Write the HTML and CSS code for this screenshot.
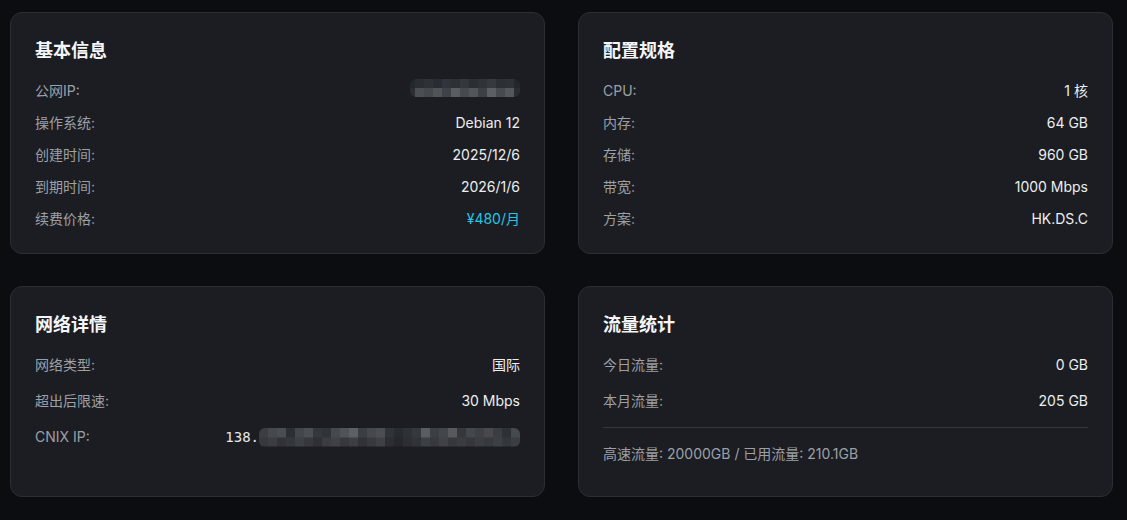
FILE: index.html
```html
<!DOCTYPE html>
<html lang="zh-CN">
<head>
<meta charset="utf-8">
<title>服务器详情</title>
<link rel="stylesheet" href="styles.css">
</head>
<body>
<main class="grid">
  <section class="card">
    <h2 class="card-title">基本信息</h2>
    <div class="rows">
      <div class="row"><span class="label">公网IP:</span><span class="value"><span class="mask mask-ip"></span></span></div>
      <div class="row"><span class="label">操作系统:</span><span class="value">Debian 12</span></div>
      <div class="row"><span class="label">创建时间:</span><span class="value">2025/12/6</span></div>
      <div class="row"><span class="label">到期时间:</span><span class="value">2026/1/6</span></div>
      <div class="row"><span class="label">续费价格:</span><span class="value price">¥480/月</span></div>
    </div>
  </section>
  <section class="card">
    <h2 class="card-title">配置规格</h2>
    <div class="rows">
      <div class="row"><span class="label">CPU:</span><span class="value">1 核</span></div>
      <div class="row"><span class="label">内存:</span><span class="value">64 GB</span></div>
      <div class="row"><span class="label">存储:</span><span class="value">960 GB</span></div>
      <div class="row"><span class="label">带宽:</span><span class="value">1000 Mbps</span></div>
      <div class="row"><span class="label">方案:</span><span class="value">HK.DS.C</span></div>
    </div>
  </section>
  <section class="card">
    <h2 class="card-title">网络详情</h2>
    <div class="rows rows-wide">
      <div class="row"><span class="label">网络类型:</span><span class="value">国际</span></div>
      <div class="row"><span class="label">超出后限速:</span><span class="value">30 Mbps</span></div>
      <div class="row"><span class="label">CNIX IP:</span><span class="value mono">138.<span class="mask mask-cnix"></span></span></div>
    </div>
  </section>
  <section class="card">
    <h2 class="card-title">流量统计</h2>
    <div class="rows rows-wide">
      <div class="row"><span class="label">今日流量:</span><span class="value">0 GB</span></div>
      <div class="row"><span class="label">本月流量:</span><span class="value">205 GB</span></div>
    </div>
    <div class="traffic-foot">高速流量: 20000GB / 已用流量: 210.1GB</div>
  </section>
</main>
</body>
</html>
```
FILE: styles.css
```css
* { box-sizing: border-box; }
html, body { margin: 0; padding: 0; }
body {
  background: #0b0d11;
  color: #e8eaed;
  font-family: Inter, "Noto Sans CJK SC", sans-serif;
  font-size: 14px;
  width: 1127px;
  height: 520px;
  overflow: hidden;
}
.grid {
  display: grid;
  grid-template-columns: 535px 535px;
  column-gap: 33px;
  row-gap: 32px;
  padding: 12px 14px 0 10px;
}
.card {
  background: #1b1d22;
  border: 1px solid #2b2e33;
  border-radius: 12px;
  padding: 24px;
}
.card-title {
  margin: 0 0 16px;
  font-size: 18px;
  line-height: 28px;
  font-weight: 600;
  color: #f4f5f6;
}
.rows {
  display: flex;
  flex-direction: column;
  gap: 12px;
}
.rows-wide { gap: 16px; }
.row {
  display: flex;
  justify-content: space-between;
  align-items: center;
  line-height: 20px;
  height: 20px;
}
.label { color: #9ba0a8; }
.value { color: #eceef0; display: inline-flex; align-items: center; }
.price { color: #27c6e3; }
.mono {
  font-family: "DejaVu Sans Mono", "Liberation Mono", monospace;
  font-size: 14px;
  color: #e6e8ea;
}
.mask {
  display: inline-block;
  filter: blur(0.7px);
  border-radius: 6px;
}
.mask-ip {
  width: 110px;
  height: 18px;
  margin-top: -6px;
  background:
    linear-gradient(to right,
      #24272b 0 5px, #2a2d31 5px 14px, #2e3135 14px 23px, #292c30 23px 32px, #31343a 32px 41px,
      #2d3034 41px 50px, #34373b 50px 59px, #2b2e32 59px 68px, #303337 68px 77px, #36393d 77px 86px,
      #2c2f33 86px 95px, #2e3135 95px 104px, #23262a 104px 110px) top / 100% 50% no-repeat,
    linear-gradient(to right,
      #2a2d31 0 5px, #4b4e52 5px 14px, #45484c 14px 23px, #505357 23px 32px, #3f4246 32px 41px,
      #5a5d61 41px 50px, #46494d 50px 59px, #525559 59px 68px, #3d4044 68px 77px, #5c5f63 77px 86px,
      #474a4e 86px 95px, #54575b 95px 104px, #2a2d31 104px 110px) bottom / 100% 50% no-repeat;
}
.mask-cnix {
  width: 261px;
  height: 19px;
  margin-left: 0;
  background:
    linear-gradient(to right,
      #3a3d41 0 9px, #45484c 9px 18px, #4a4d51 18px 27px, #2c2f33 27px 36px, #43464a 36px 45px,
      #4b4e52 45px 54px, #34373b 54px 63px, #303337 63px 72px, #46494d 72px 81px, #505357 81px 90px,
      #5d6064 90px 99px, #3b3e42 99px 108px, #45484c 108px 117px, #4a4d51 117px 126px, #303337 126px 135px,
      #282b2f 135px 144px, #2e3135 144px 153px, #35383c 153px 162px, #5a5d61 162px 171px, #3c3f43 171px 180px,
      #43464a 180px 189px, #57595d 189px 198px, #34373b 198px 207px, #44474b 207px 216px, #3d4044 216px 225px,
      #47494d 225px 234px, #3a3d41 234px 243px, #2d3034 243px 252px, #46494d 252px 261px) top / 100% 50% no-repeat,
    linear-gradient(to right,
      #35383c 0 9px, #3a3d41 9px 18px, #2f3236 18px 27px, #34373b 27px 36px, #3c3f43 36px 45px,
      #35383c 45px 54px, #2d3034 54px 63px, #393c40 63px 72px, #3e4145 72px 81px, #35383c 81px 90px,
      #3b3e42 90px 99px, #2f3236 99px 108px, #37393d 108px 117px, #3d4044 117px 126px, #2a2d31 126px 135px,
      #24272b 135px 144px, #2b2e32 144px 153px, #303337 153px 162px, #3c3f43 162px 171px, #36393d 171px 180px,
      #3f4246 180px 189px, #35383c 189px 198px, #393c40 198px 207px, #34373b 207px 216px, #3a3d41 216px 225px,
      #36393d 225px 234px, #3c3f43 234px 243px, #34373b 243px 252px, #3a3d41 252px 261px) bottom / 100% 50% no-repeat;
}
.traffic-foot {
  margin-top: 16px;
  margin-bottom: 8px;
  border-top: 1px solid #33363b;
  padding-top: 16px;
  line-height: 20px;
  color: #9ba0a8;
}
```
